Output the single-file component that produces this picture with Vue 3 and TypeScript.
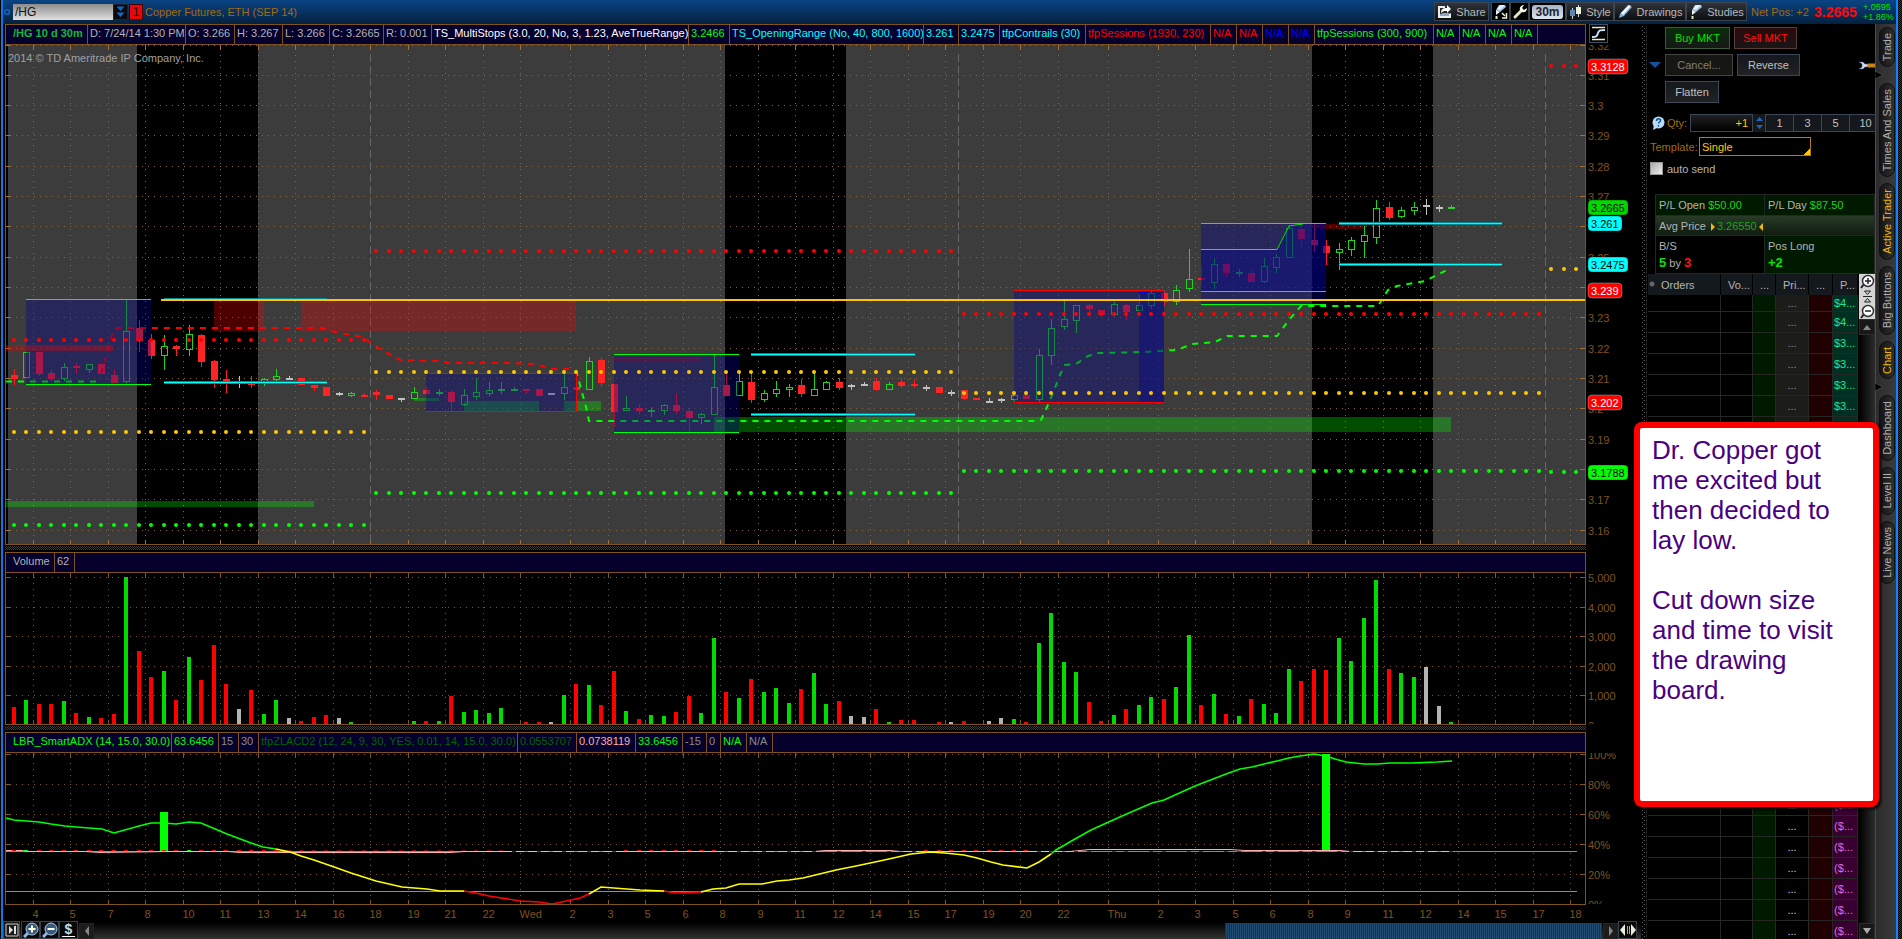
<script setup lang="ts">
type Tone = 'r' | 'g' | 'w'
interface Cell { text: string; width: number; color: string; bold?: boolean }
interface Candle { x: number; tone: Tone; high: number; low: number; top: number; bottom: number }
interface Zone { x: number; y: number; w: number; h: number; kind: string }
interface AxisLabel { text: string; y: number }

const STEP = 12.5
const FIRST = 14
const barX = (i: number): number => Math.floor(FIRST + i * STEP)

const priceHeader: Cell[] = [
  { text: '/HG 10 d 30m', width: 82, color: '#12b83c', bold: true },
  { text: 'D: 7/24/14 1:30 PM', width: 98, color: '#b4b4b4' },
  { text: 'O: 3.266', width: 49, color: '#b4b4b4' },
  { text: 'H: 3.267', width: 48, color: '#b4b4b4' },
  { text: 'L: 3.266', width: 47, color: '#b4b4b4' },
  { text: 'C: 3.2665', width: 54, color: '#b4b4b4' },
  { text: 'R: 0.001', width: 48, color: '#b4b4b4' },
  { text: 'TS_MultiStops (3.0, 20, No, 3, 1.23, AveTrueRange)', width: 257, color: '#ffffff' },
  { text: '3.2466', width: 41, color: '#00ff00' },
  { text: 'TS_OpeningRange (No, 40, 800, 1600)', width: 194, color: '#00ffff' },
  { text: '3.261', width: 35, color: '#00ffff' },
  { text: '3.2475', width: 41, color: '#00ffff' },
  { text: 'tfpContrails (30)', width: 86, color: '#00ffff' },
  { text: 'tfpSessions (1930, 230)', width: 125, color: '#ff0000' },
  { text: 'N/A', width: 26, color: '#ff0000' },
  { text: 'N/A', width: 26, color: '#ff0000' },
  { text: 'N/A', width: 26, color: '#0000ff' },
  { text: 'N/A', width: 26, color: '#0000ff' },
  { text: 'tfpSessions (300, 900)', width: 119, color: '#00ff00' },
  { text: 'N/A', width: 26, color: '#00ff00' },
  { text: 'N/A', width: 26, color: '#00ff00' },
  { text: 'N/A', width: 26, color: '#00ff00' },
  { text: 'N/A', width: 26, color: '#00ff00' }
]
const volumeHeader: Cell[] = [
  { text: 'Volume', width: 49, color: '#b4b4b4' },
  { text: '62', width: 20, color: '#b4b4b4' }
]
const adxHeader: Cell[] = [
  { text: 'LBR_SmartADX (14, 15.0, 30.0)', width: 166, color: '#00ff00' },
  { text: '63.6456', width: 47, color: '#00ff00' },
  { text: '15', width: 20, color: '#8c8c8c' },
  { text: '30', width: 20, color: '#8c8c8c' },
  { text: 'tfpZLACD2 (12, 24, 9, 30, YES, 0.01, 14, 15.0, 30.0)', width: 259, color: '#006400' },
  { text: '0.0553707', width: 59, color: '#006400' },
  { text: '0.0738119', width: 59, color: '#ffafaf' },
  { text: '33.6456', width: 47, color: '#00ff00' },
  { text: '-15', width: 24, color: '#8c8c8c' },
  { text: '0', width: 14, color: '#8c8c8c' },
  { text: 'N/A', width: 26, color: '#00ff00' },
  { text: 'N/A', width: 26, color: '#8c8c8c' }
]

const times = '33:4 70:5 108:7 145:8 183:10 220:11 258:13 295:14 333:16 370:18 408:19 445:21 483:22 520:Wed 570:2 608:3 645:5 683:6 720:8 758:9 795:11 833:12 870:14 908:15 945:17 983:19 1020:20 1058:22 1108:Thu 1158:2 1195:3 1233:5 1270:6 1308:8 1345:9 1383:11 1420:12 1458:14 1495:15 1533:17 1570:18'
  .split(' ')
  .map((t) => { const [x, label] = t.split(':'); return { x: Number(x) + 0.5, label } })

/* tone, high, low, body top, body bottom for each half-hour bar */
const candles: Candle[] = `r369,385,375,379 g352,378,352,378 r352,376,352,374 r370,381,373,379 g363,381,367,379 r363,374,366,368
g364,373,364,370 r363,374,364,374 r370,383,375,383 g300,383,331,382 r320,352,328,341 r334,359,340,356
g335,370,346,356 r345,356,346,349 g325,356,334,350 r334,367,335,362 r360,388,361,380 r370,393,379,381
w376,388,383,384 r376,388,383,385 g378,386,379,382 g369,382,376,380 w376,380,378,380 r378,385,378,385
r385,391,385,388 r387,396,387,396 w392,396,393,395 g392,397,393,396 r393,397,395,397 r390,400,392,395
r395,399,395,399 w398,402,398,400 g387,399,392,399 r387,394,390,394 g389,396,392,394 r390,411,392,402
g389,406,395,405 g378,400,392,397 g382,396,390,394 g382,394,389,391 g387,391,389,391 r389,394,389,391
r389,396,389,396 w393,395,393,395 g374,400,387,394 r370,394,387,390 g357,390,361,390 r358,386,360,383
r384,427,384,412 g396,411,408,411 r404,414,408,411 g407,417,410,412 g404,415,405,411 r393,414,405,411
r408,432,411,418 g413,424,414,418 g355,415,387,415 r373,396,385,396 g372,396,381,396 r372,403,382,400
g390,402,393,400 g381,397,389,394 g384,397,387,390 r379,397,385,394 g372,396,389,396 g381,390,382,390
r378,390,382,388 w384,390,385,387 w382,386,384,386 r378,391,381,390 g382,390,384,390 r378,388,382,386
r379,388,384,386 w385,391,387,389 r387,393,387,393 w390,396,392,394 r390,400,390,399 r398,400,398,400
w398,403,401,403 w398,403,399,401 g395,402,395,400 r395,399,395,399 g349,402,355,400 g319,365,328,356
g301,330,319,327 g305,333,305,321 r304,316,305,309 r310,315,310,315 g302,316,304,315 r304,320,305,312
g293,311,305,311 g291,309,293,306 r291,306,293,302 g285,305,290,302 g249,292,279,289 r266,287,278,280
g258,289,264,283 r263,277,264,273 g269,277,272,274 r270,282,273,282 g258,283,266,282 g254,273,257,268
g225,258,228,258 r225,247,229,239 r224,252,240,245 r240,265,246,253 g243,270,249,253 g237,256,240,250
g226,258,235,242 g200,244,208,238 r202,220,207,218 g207,218,210,217 g202,215,207,211 w199,215,205,207
w205,212,207,209 g205,209,207,209`
  .split(/\s+/)
  .map((s, i) => {
    const [high, low, top, bottom] = s.slice(1).split(',').map(Number)
    return { x: barX(i), tone: s[0] as Tone, high, low, top, bottom }
  })

const volumes = `r17 g24 r20 r20 g23 r11 g7 r6 r10 g147 r73 r47 g53 r24 g67 r44 r79 r40 w15 r34 g10 g24 w6 r3 r7 r9 w6 g2
w0 w0 w0 w0 g3 r3 g3 r28 g12 g14 g11 g16 w0 r2 r2 w2 g29 r40 g39 r19 r53 g13 r5 g9 g8 r12 r28 g11 g86 r32 g26 r45 g32 g36
g21 r35 g51 g20 r23 w8 w7 r15 g2 r4 r4 w0 r2 w2 r3 w0 w3 w6 g5 r2 g81 g111 g62 g52 r22 r3 g9 r15 g19 g27 r25 g37 g89 r19
g30 r10 g8 r25 g20 g11 g55 r43 r55 r54 g86 g63 g106 g144 r55 g51 g47 w57 w18 g2`
  .split(/\s+/)
  .map((s, i) => ({ x: barX(i), tone: s[0] as Tone, h: Number(s.slice(1)) }))

const zones: Zone[] = [
  { x: 26, y: 299, w: 125, h: 85, kind: 'blue' },
  { x: 6, y: 345, w: 107, h: 6, kind: 'red' },
  { x: 214, y: 301, w: 50, h: 30, kind: 'red' },
  { x: 301, y: 301, w: 275, h: 30, kind: 'red' },
  { x: 6, y: 501, w: 308, h: 6, kind: 'green' },
  { x: 414, y: 398, w: 25, h: 3, kind: 'green' },
  { x: 464, y: 401, w: 75, h: 10, kind: 'green' },
  { x: 564, y: 401, w: 37, h: 10, kind: 'green' },
  { x: 426, y: 373, w: 150, h: 38, kind: 'blue' },
  { x: 614, y: 357, w: 87, h: 4, kind: 'red' },
  { x: 714, y: 417, w: 737, h: 15, kind: 'green' },
  { x: 614, y: 354, w: 125, h: 78, kind: 'blue' },
  { x: 1014, y: 290, w: 150, h: 112, kind: 'blue' },
  { x: 1139, y: 292, w: 25, h: 110, kind: 'blue' },
  { x: 1314, y: 224, w: 50, h: 5, kind: 'red' },
  { x: 1201, y: 224, w: 125, h: 81, kind: 'blue' }
]
const edges: { d: string; color: string }[] = [
  { d: 'M26 299.5H151M26 384.5H151M614 354.5H739M614 432.5H739M1201 223.5H1326M1201 249.5H1277M1201 291.5H1326M1201 304.5H1326', color: '#00ff00' },
  { d: 'M426 373.5H576V411.5H426M1014 290.5H1164M1014 402.5H1164', color: '#ff0000' }
]
const cyanLines = 'M164 299.5H327M164 382.5H327M751 354.5H915M751 414.5H915M1339 223.5H1502M1339 264.5H1502'

const dotRows: { y: number; from: number; to: number; color: string }[] = [
  { y: 340, from: 0, to: 28, color: '#ff0000' },
  { y: 251, from: 29, to: 75, color: '#ff0000' },
  { y: 314, from: 76, to: 122, color: '#ff0000' },
  { y: 66, from: 123, to: 125, color: '#ff0000' },
  { y: 432, from: 0, to: 28, color: '#ffc800' },
  { y: 372, from: 29, to: 75, color: '#ffc800' },
  { y: 393, from: 76, to: 122, color: '#ffc800' },
  { y: 269, from: 123, to: 125, color: '#ffc800' },
  { y: 525, from: 0, to: 28, color: '#00ff00' },
  { y: 493, from: 29, to: 75, color: '#00ff00' },
  { y: 471, from: 76, to: 122, color: '#00ff00' },
  { y: 472, from: 123, to: 125, color: '#00ff00' }
]
const dots = dotRows.flatMap((r) =>
  Array.from({ length: r.to - r.from + 1 }, (_, k) => ({ x: barX(r.from + k), y: r.y, color: r.color }))
)

const priceGrid: AxisLabel[] = [
  { text: '3.32', y: 45 }, { text: '3.31', y: 75 }, { text: '3.3', y: 105 }, { text: '3.29', y: 135 },
  { text: '3.28', y: 166 }, { text: '3.27', y: 196 }, { text: '3.26', y: 226 }, { text: '3.25', y: 257 },
  { text: '3.24', y: 287 }, { text: '3.23', y: 317 }, { text: '3.22', y: 348 }, { text: '3.21', y: 378 },
  { text: '3.2', y: 408 }, { text: '3.19', y: 439 }, { text: '3.18', y: 469 }, { text: '3.17', y: 499 },
  { text: '3.16', y: 530 }
]
const hiddenByBubble = ['3.26', '3.24', '3.18']
const priceLabels = priceGrid.filter((g) => !hiddenByBubble.includes(g.text))
const volumeGrid: AxisLabel[] = [
  { text: '5,000', y: 577 }, { text: '4,000', y: 607 }, { text: '3,000', y: 636 },
  { text: '2,000', y: 666 }, { text: '1,000', y: 695 }, { text: '0', y: 725 }
]
const adxGrid: AxisLabel[] = [
  { text: '100%', y: 754 }, { text: '80%', y: 784 }, { text: '60%', y: 814 },
  { text: '40%', y: 844 }, { text: '20%', y: 874 }, { text: '0%', y: 904 }
]
const pct = (v: number, start: number, span: number): string => `${((v - start) / span) * 100}%`

const bubbles = [
  { text: '3.3128', y: 66, w: 40, bg: '#ff0000', fg: '#ffffff' },
  { text: '3.2665', y: 207, w: 40, bg: '#00d800', fg: '#000000' },
  { text: '3.261', y: 223, w: 34, bg: '#00ffff', fg: '#000000' },
  { text: '3.2475', y: 264, w: 40, bg: '#00ffff', fg: '#000000' },
  { text: '3.239', y: 290, w: 34, bg: '#ff0000', fg: '#ffffff' },
  { text: '3.202', y: 402, w: 34, bg: '#ff0000', fg: '#ffffff' },
  { text: '3.1788', y: 472, w: 40, bg: '#00ff00', fg: '#000000' }
]

const histogram = Array.from({ length: 116 }, (_, i) => {
  let color = '#ff0000'
  if (i === 1 || i === 14) color = '#00ff00'
  else if (i >= 22 && i <= 40) color = '#8b0000'
  else if (i >= 41 && i <= 48) color = i % 2 ? '#00e000' : '#006400'
  else if (i >= 57 && i <= 72) color = i % 2 ? '#00e000' : '#006400'
  else if (i >= 82) color = i % 3 ? '#006400' : '#00e000'
  return { x: barX(i) - 2, y: i < 40 || (i > 48 && i < 57) || (i > 72 && i < 82) ? 850 : 851, color }
})

const adxSegments: { color: string; points: string }[] = [
  { color: '#00ff00', points: '6,818 14,820 39,822 51,824 65,826 76,827 102,829 114,833 139,826 151,823 164,823 176,824 189,822 201,823 227,834 251,843 263,847 276,849' },
  { color: '#ffff00', points: '276,849 290,852 301,856 314,860 337,868 351,873 376,881 402,887 427,889 440,891 451,891 464,891' },
  { color: '#ff0000', points: '464,891 476,893 489,896 520,901 539,902 552,904 571,900 580,898 589,894' },
  { color: '#ffff00', points: '589,894 601,887 640,890 664,891' },
  { color: '#ff0000', points: '664,891 676,893 701,892' },
  { color: '#ffff00', points: '701,892 713,889 726,888 739,884 762,884 777,881 789,880 803,878 836,870 856,866 875,862 889,859 911,854 930,852 945,853 964,855 977,858 991,862 1003,865 1027,868 1039,862 1051,854' },
  { color: '#00ff00', points: '1051,854 1056,850 1075,839 1091,830 1122,816 1152,803 1164,800 1195,786 1226,774 1240,769 1252,767 1264,764 1277,761 1289,758 1300,756 1314,754 1326,756 1335,759 1346,762 1364,764 1377,764 1390,763 1411,763 1437,762 1452,761' }
]

const tabs = [
  { label: 'Trade', cls: 'far' },
  { label: 'Times And Sales', cls: '' },
  { label: 'Active Trader', cls: 'on' },
  { label: 'Big Buttons', cls: '' },
  { label: 'Chart', cls: 'on far' },
  { label: 'Dashboard', cls: '' },
  { label: 'Level II', cls: '' },
  { label: 'Live News', cls: '' }
]

/* quotes exist for the first six levels and from level 24 down */
const ladder = Array.from({ length: 31 }, (_, i) => {
  const quoted = i < 6 || i > 23
  return {
    up: i < 15,
    price: quoted ? '...' : '',
    pl: !quoted ? '' : i < 2 ? '$4...' : i < 15 ? '$3...' : '($...'
  }
})
</script>

<template>
  <div class="app">
    <div class="edge left"></div>
    <div class="window">
      <header class="topbar">
        <svg class="pin" width="8" height="8" viewBox="0 0 8 8"><circle cx="4" cy="4" r="2.4" fill="none" stroke="#1668c8" stroke-width="1.4" /></svg>
        <input class="symbol" type="text" value="/HG" aria-label="Symbol" />
        <button class="drop" aria-label="Symbol list">
          <svg width="13" height="14" viewBox="0 0 13 14"><path d="M2.500 1.500h8L6.500 6zM2.500 7.500h8L6.500 12z" fill="#1668c8" /></svg>
        </button>
        <button class="link-no">1</button>
        <h1>Copper Futures, ETH (SEP 14)</h1>
        <div class="tools">
          <button class="tool share">
            <svg width="15" height="13" viewBox="0 0 15 13"><path d="M1 1h7v2H3v8h9V9l2-1v5H1z" fill="#e8edf2" /><path d="M3 11h9V8H6l-3 1z" fill="#8fa4b8" /><path d="M4 8c0-4 2-5 6-5V0l4 4-4 4V6C8 6 6 6 4 8z" fill="#fff" /></svg>
            Share
          </button>
          <button class="tool square" aria-label="Quick studies">
            <svg width="16" height="16" viewBox="0 0 16 16"><path d="M6 1l6 0 1 2-6 5-4-2z" fill="#9cc4e0" /><path d="M7 1l5 0-5 5-3-1z" fill="#e4f0f8" /><path d="M3 6l4 2-4 3z" fill="#f4f8fb" /><path d="M3.500 12v3" stroke="#d8f0c0" stroke-width="2" /><path d="M9 9l3 3M13.500 9v5H9" stroke="#f0f0d8" stroke-width="1.500" fill="none" /></svg>
          </button>
          <button class="tool square" aria-label="Settings">
            <svg width="16" height="16" viewBox="0 0 16 16"><path d="M3 13l6-6" stroke="#dfe6c0" stroke-width="3" stroke-linecap="round" /><path d="M12 1L10 4l2 2 3-2c0 4-3 5-5 4L8 6c-1-2 1-5 4-5z" fill="#f4f6e8" /></svg>
          </button>
          <button class="tool period"><span>30m</span></button>
          <button class="tool style">
            <svg width="13" height="15" viewBox="0 0 13 15"><path d="M3.500 4v11M9.500 1v12" stroke="#c8d8e0" /><path d="M1 6h5v6H1z" fill="#5f88b0" /><path d="M7 3h5v7H7z" fill="#e8f0dc" /></svg>
            Style
          </button>
          <button class="tool drawings">
            <svg width="15" height="15" viewBox="0 0 15 15"><path d="M1 14l1-4L10 1l4 2-8 9z" fill="#7fb4e0" /><path d="M3 9l8-8 2 1-8 9z" fill="#f4f8fb" /></svg>
            Drawings
          </button>
          <button class="tool studies">
            <svg width="14" height="16" viewBox="0 0 14 16"><path d="M6 1l6 0 1 2-6 5-4-2z" fill="#9cc4e0" /><path d="M7 1l5 0-5 5-3-1z" fill="#e4f0f8" /><path d="M3 6l4 2-4 3z" fill="#f4f8fb" /><path d="M3.500 12v3" stroke="#d8f0c0" stroke-width="2" /></svg>
            Studies
          </button>
        </div>
        <span class="netpos">Net Pos: +2</span>
        <strong class="last">3.2665</strong>
        <span class="change"><span>+.0595</span><span>+1.86%</span></span>
      </header>

      <div class="body">
        <main class="charts">
          <section class="row price-row">
            <div class="panel">
              <div class="cells">
                <span v-for="(c, i) in priceHeader" :key="i" :class="{ bold: c.bold }" :style="{ width: c.width + 'px', color: c.color }">{{ c.text }}</span>
              </div>
              <svg class="plot" viewBox="6 45 1579 499" preserveAspectRatio="none">
                <rect x="6" y="45" width="1579" height="499" fill="#000" />
                <path d="M8 45H137V544H8zM258 45H725V544H258zM846 45H1312V544H846zM1433 45H1585V544H1433z" fill="#3c3c3c" />
                <g class="grid" stroke="#84683f">
                  <line v-for="t in times" :key="t.x" :x1="t.x" :x2="t.x" y1="55" y2="540" />
                  <line v-for="g in priceGrid" :key="g.y" x1="10" x2="1580" :y1="g.y + 0.5" :y2="g.y + 0.5" />
                </g>
                <g class="crisp" stroke="#a07038">
                  <path v-for="t in times" :key="t.x" :d="`M${t.x} 45v5M${t.x} 540v4`" />
                  <path v-for="g in priceGrid" :key="g.y" :d="`M6 ${g.y + 0.5}h5M1580 ${g.y + 0.5}h5`" />
                </g>
                <path d="M370.500 54V544M958.500 54V544M1545.500 54V544" stroke="#666" stroke-dasharray="8 4" class="crisp" />
                <g class="crisp">
                  <g v-for="c in candles" :key="c.x" :class="'c-' + c.tone">
                    <template v-if="c.tone === 'g' && c.bottom - c.top > 2">
                      <path :d="`M${c.x + 0.5} ${c.high}V${c.top}M${c.x + 0.5} ${c.bottom}V${c.low}`" />
                      <rect class="hollow" :x="c.x - 2.5" :y="c.top + 0.5" width="6" :height="c.bottom - c.top - 1" />
                    </template>
                    <template v-else>
                      <path :d="`M${c.x + 0.5} ${c.high}V${c.low}`" />
                      <rect class="solid" :x="c.x - 3" :y="c.top" width="7" :height="Math.max(1, c.bottom - c.top)" />
                    </template>
                  </g>
                </g>
                <path d="M6 381.500H101M576 370L580 385 586 407 589 421 1035 421 1041 420 1047 407 1053 393 1060 375 1065 365 1076 364 1088 356 1098 353 1145 352 1174 350 1182 348 1192 344 1215 342 1227 336 1277 336 1289 320 1301 306 1378 306 1388 290 1397 286 1425 281 1435 276 1447 270" fill="none" stroke="#00ff00" stroke-width="2" stroke-dasharray="6 6" />
                <path d="M101 374L113 332 118 328 322 328 335 332 363 337 370 342 380 349 400 360 439 361 449 363 510 363 535 364 551 369 569 369" fill="none" stroke="#ff0000" stroke-width="2" stroke-dasharray="6 6" />
                <rect v-for="(z, i) in zones" :key="i" :x="z.x" :y="z.y" :width="z.w" :height="z.h" :class="'z-' + z.kind" />
                <path class="z-blue" d="M1201 249H1277L1289 226 1303 224H1326V291H1201z" />
                <path d="M1277 249.500L1289 226 1303 224" fill="none" stroke="#00e000" />
                <path d="M1139 293L1150 291" fill="none" stroke="#0000e0" stroke-width="2" />
                <path v-for="e in edges" :key="e.color" :d="e.d" :stroke="e.color" fill="none" class="crisp" />
                <path :d="cyanLines" stroke="#008890" stroke-width="3" class="crisp" />
                <path :d="cyanLines" stroke="#00ffff" class="crisp" />
                <path d="M161 300H1585" stroke="#ffc010" stroke-width="2" class="crisp" />
                <circle v-for="(d, i) in dots" :key="i" :cx="d.x" :cy="d.y" r="2" :fill="d.color" />
              </svg>
              <span class="copyright">2014 © TD Ameritrade IP Company, Inc.</span>
            </div>
            <div class="axis">
              <div class="axis-head">
                <button class="curve" aria-label="Price scale">
                  <svg width="17" height="17" viewBox="0 0 17 17"><path d="M2 2.500h13M2 14.500h13" stroke="#e8e8c0" stroke-width="1.500" /><path d="M2 12c5 0 5-1 6-4s2-3 7-3" fill="none" stroke="#c8e0f8" stroke-width="2" /></svg>
                </button>
              </div>
              <svg class="scale">
                <text v-for="g in priceLabels" :key="g.y" x="2" :y="pct(g.y + 5, 45, 499)">{{ g.text }}</text>
                <g v-for="b in bubbles" :key="b.text">
                  <rect x="2" :y="pct(b.y - 7, 45, 499)" :width="b.w" height="15" rx="4" :fill="b.bg" :stroke="b.fg" stroke-opacity="0.3" />
                  <text x="5" :y="pct(b.y + 5, 45, 499)" :style="{ fill: b.fg }">{{ b.text }}</text>
                </g>
              </svg>
            </div>
          </section>

          <div class="hsplit"></div>

          <section class="row sub-row">
            <div class="panel">
              <div class="cells">
                <span v-for="(c, i) in volumeHeader" :key="i" :style="{ width: c.width + 'px', color: c.color }">{{ c.text }}</span>
              </div>
              <svg class="plot" viewBox="6 573 1579 151" preserveAspectRatio="none">
                <g class="grid" stroke="#80571f">
                  <line v-for="t in times" :key="t.x" :x1="t.x" :x2="t.x" y1="583" y2="720" />
                  <line v-for="g in volumeGrid" :key="g.y" x1="10" x2="1580" :y1="g.y + 0.5" :y2="g.y + 0.5" />
                </g>
                <g class="crisp" stroke="#80571f">
                  <path v-for="t in times" :key="t.x" :d="`M${t.x} 573v5M${t.x} 720v4`" />
                  <path v-for="g in volumeGrid" :key="g.y" :d="`M6 ${g.y + 0.5}h5M1580 ${g.y + 0.5}h5`" />
                </g>
                <rect v-for="v in volumes" :key="v.x" :x="v.x - 2" :y="724 - v.h" width="4" :height="v.h" :class="'v-' + v.tone" />
              </svg>
            </div>
            <div class="axis">
              <div class="axis-head"></div>
              <svg class="scale">
                <text v-for="g in volumeGrid" :key="g.y" x="2" :y="pct(g.y + 5, 573, 151)">{{ g.text }}</text>
              </svg>
            </div>
          </section>

          <div class="hsplit"></div>

          <section class="row sub-row">
            <div class="panel">
              <div class="cells">
                <span v-for="(c, i) in adxHeader" :key="i" :style="{ width: c.width + 'px', color: c.color }">{{ c.text }}</span>
              </div>
              <svg class="plot" viewBox="6 753 1579 151" preserveAspectRatio="none">
                <g class="grid" stroke="#80571f">
                  <line v-for="t in times" :key="t.x" :x1="t.x" :x2="t.x" y1="763" y2="900" />
                  <line v-for="g in adxGrid" :key="g.y" x1="10" x2="1580" :y1="g.y + 0.5" :y2="g.y + 0.5" />
                </g>
                <g class="crisp" stroke="#80571f">
                  <path v-for="t in times" :key="t.x" :d="`M${t.x} 753v5M${t.x} 900v4`" />
                  <path v-for="g in adxGrid" :key="g.y" :d="`M6 ${g.y + 0.5}h5M1580 ${g.y + 0.5}h5`" />
                </g>
                <path d="M6 851.500H1577M6 891.500H1577" stroke="#8c8c8c" class="crisp" />
                <path d="M160 812h8v39h-8zM1322 754h8v97h-8z" fill="#00ff00" />
                <polyline points="6,850.5 22,850.5 26,851.5 85,851.5 100,852.5 170,851.5 228,851.5 240,852.5 450,852.5 465,851.5 815,851.5 825,850.5 890,850.5 900,851.5 1070,851.5 1090,849.5 1230,849.5 1245,850.5 1340,850.5 1350,851.5 1453,851.5" fill="none" stroke="#ffafaf" />
                <rect v-for="h in histogram" :key="h.x" :x="h.x" :y="h.y" width="4" height="1" :fill="h.color" />
                <polyline v-for="s in adxSegments" :key="s.points" :points="s.points" :stroke="s.color" fill="none" stroke-width="1.6" />
              </svg>
            </div>
            <div class="axis">
              <div class="axis-head"></div>
              <svg class="scale">
                <text v-for="g in adxGrid" :key="g.y" x="2" :y="pct(g.y + 5, 753, 151)">{{ g.text }}</text>
              </svg>
            </div>
          </section>

          <svg class="times">
            <text v-for="t in times" :key="t.x" :x="pct(t.x - 1, 6, 1579)" y="13">{{ t.label }}</text>
          </svg>

          <footer class="bottom">
            <button class="mini corner" aria-label="Collapse sidebar">
              <svg width="14" height="14" viewBox="0 0 14 14"><path d="M1 1h12v12H1z" fill="none" stroke="#ccc" /><path d="M4 3l4 4-4 4zM9 3h2v8H9z" fill="#ddd" /></svg>
            </button>
            <button class="mini" aria-label="Zoom in">
              <svg width="16" height="16" viewBox="0 0 16 16"><path d="M1 15l4-4" stroke="#8fb8e0" stroke-width="3" /><circle cx="9" cy="7" r="6" fill="#3a5a80" stroke="#a8c8e8" /><path d="M9 3.500v7M5.500 7h7" stroke="#ffffd8" stroke-width="2" /></svg>
            </button>
            <button class="mini" aria-label="Zoom out">
              <svg width="16" height="16" viewBox="0 0 16 16"><path d="M1 15l4-4" stroke="#8fb8e0" stroke-width="3" /><circle cx="9" cy="7" r="6" fill="#3a5a80" stroke="#a8c8e8" /><path d="M5.500 7h7" stroke="#ffffd8" stroke-width="2" /></svg>
            </button>
            <button class="mini dollar"><span>$</span></button>
            <button class="mini arrow" aria-label="Scroll left">
              <svg width="6" height="10" viewBox="0 0 6 10"><path d="M5 0v10L1 5z" fill="#888" /></svg>
            </button>
            <div class="track"><div class="thumb"></div></div>
            <button class="mini arrow" aria-label="Scroll right">
              <svg width="6" height="10" viewBox="0 0 6 10"><path d="M1 0v10l4-5z" fill="#888" /></svg>
            </button>
            <button class="mini fit" aria-label="Fit to width">
              <svg width="16" height="12" viewBox="0 0 16 12"><path d="M5 0v12L0 6zM11 0v12l5-6z" fill="#e8eed8" /><path d="M7.500 2v8M9.500 2v8" stroke="#9ab" /></svg>
            </button>
          </footer>
        </main>

        <div class="vsplit"></div>

        <aside class="trader">
          <div class="orders-box">
            <div class="line">
              <button class="btn buy">Buy MKT</button>
              <button class="btn sell">Sell MKT</button>
            </div>
            <div class="line with-tri">
              <svg class="tri" width="12" height="7" viewBox="0 0 12 7"><path d="M0 0h12L6 6z" fill="#1850a0" /></svg>
              <button class="btn cancel">Cancel...</button>
              <button class="btn reverse">Reverse</button>
              <svg class="wrench" width="17" height="9" viewBox="0 0 17 9"><path d="M1 1h4l2 2h3v3H7L5 8H1l3-2V3z" fill="#d4dcee" stroke="#3c4c90" stroke-width="0.6" /><path d="M10 2.500h7v4h-7z" fill="#c88420" /></svg>
            </div>
            <div class="line"><button class="btn flatten">Flatten</button></div>
          </div>
          <div class="qty">
            <svg width="14" height="15" viewBox="0 0 14 15"><circle cx="7.500" cy="6.500" r="6" fill="#b8dcf8" /><path d="M3 9l-1 5 6-3z" fill="#b8dcf8" /><path d="M5.500 5c0-3 4-3 4-.5 0 1.500-2 1.500-2 3M7.500 9v1.500" fill="none" stroke="#10508a" stroke-width="1.500" /></svg>
            <label for="qty">Qty:</label>
            <input id="qty" type="text" value="+1" />
            <button class="spin" aria-label="Change quantity">
              <svg width="9" height="16" viewBox="0 0 9 16"><path d="M1 6l3.500-4L8 6zM1 10l3.500 4L8 10z" fill="#1668c8" /></svg>
            </button>
            <button class="preset">1</button><button class="preset">3</button><button class="preset">5</button><button class="preset wide">10</button>
          </div>
          <div class="template">
            <label for="tpl">Template:</label>
            <select id="tpl"><option>Single</option></select>
          </div>
          <div class="auto">
            <input id="auto" type="checkbox" />
            <label for="auto">auto send</label>
          </div>
          <div class="pl">
            <div class="p green">P/L Open <b>$50.00</b></div>
            <div class="p green">P/L Day <b>$87.50</b></div>
            <div class="p avg">Avg Price <i class="tr"></i><b>3.26550</b><i class="tl"></i></div>
            <div class="p two">B/S<span><strong class="g">5</strong> by <strong class="r">3</strong></span></div>
            <div class="p two green">Pos Long<span><strong class="g">+2</strong></span></div>
          </div>
          <div class="ladder">
            <table>
              <colgroup><col class="k1" /><col class="k2" /><col class="k3" /><col class="k4" /><col class="k5" /><col class="k6" /></colgroup>
              <thead>
                <tr><th class="first">Orders</th><th>Vo...</th><th>...</th><th>Pri...</th><th>...</th><th>P...</th></tr>
              </thead>
              <tbody>
                <tr v-for="(r, i) in ladder" :key="i" :class="{ up: r.up }">
                  <td></td><td></td><td class="bid"></td><td class="prc">{{ r.price }}</td><td class="ask"></td><td class="pnl">{{ r.pl }}</td>
                </tr>
              </tbody>
            </table>
            <div class="side">
              <button aria-label="Zoom in ladder"><svg width="15" height="15" viewBox="0 0 15 15"><path d="M1 14l3-4" stroke="#222" stroke-width="2" /><circle cx="8" cy="7" r="5.500" fill="#fff" stroke="#333" stroke-width="1.500" /><path d="M8 4v6M5 7h6" stroke="#222" stroke-width="1.500" /></svg></button>
              <button aria-label="Centre ladder"><svg width="15" height="15" viewBox="0 0 15 15"><path d="M3 7.500h9M4.500 2h6l-3 3.500zM4.500 13h6l-3-3.500z" fill="none" stroke="#222" /></svg></button>
              <button aria-label="Zoom out ladder"><svg width="15" height="15" viewBox="0 0 15 15"><path d="M1 14l3-4" stroke="#222" stroke-width="2" /><circle cx="8" cy="7" r="5.500" fill="#fff" stroke="#333" stroke-width="1.500" /><path d="M5 7h6" stroke="#222" stroke-width="1.500" /></svg></button>
              <button class="dark" aria-label="Scroll up"><svg width="8" height="5" viewBox="0 0 8 5"><path d="M0 5h8L4 0z" fill="#888" /></svg></button>
              <div class="vtrack"></div>
              <button class="dark" aria-label="Scroll down"><svg width="8" height="6" viewBox="0 0 8 6"><path d="M0 0h8L4 6z" fill="#aaa" /></svg></button>
            </div>
          </div>
        </aside>

        <nav class="tabs">
          <template v-for="t in tabs" :key="t.label">
            <button :class="t.cls"><span>{{ t.label }}</span></button>
            <svg v-if="t.cls.includes('far')" class="notch" width="8" height="8" viewBox="0 0 8 8"><path d="M0 0l8 4-8 4z" fill="#000" stroke="#666" stroke-width="0.5" /></svg>
          </template>
        </nav>
      </div>
    </div>
    <div class="edge right"></div>

    <div class="note">
      <p>Dr. Copper got me excited but then decided to lay low.</p>
      <p>Cut down size and time to visit the drawing board.</p>
    </div>
  </div>
</template>

<style>
html, body { margin: 0; background: #000; }
</style>

<style scoped>
* { box-sizing: border-box; }
.app { position: relative; display: flex; height: 100vh; min-height: 700px; overflow: hidden; background: #000; color: #b4b4b4; font: 11px/14px "Liberation Sans", Arial, sans-serif; }
button, input, select { font: inherit; color: inherit; margin: 0; padding: 0; border: 0; border-radius: 0; background: none; }
svg { display: block; flex: none; }
.edge.left { width: 3px; border-right: 2px solid #0a78e8; background: #000; }
.edge.right { width: 6px; border-left: 2px solid #0a84ff; background: repeating-conic-gradient(#303030 0 25%, #000 0 50%) 0 0 / 2px 2px; }
.window { flex: 1; min-width: 0; display: flex; flex-direction: column; }

.topbar { height: 24px; flex: none; display: flex; align-items: center; padding: 0 4px 1px 0; background: linear-gradient(#0a4484, #04203e); }
.pin { margin-right: 2px; }
.symbol { width: 100px; height: 16px; padding: 0 2px; color: #111; background: linear-gradient(#8c8c8c, #e0e0e0); font-size: 12px; }
.drop { width: 15px; height: 16px; background: #0a0a0a; border: 1px solid #223; display: flex; }
.link-no { width: 14px; height: 16px; margin-left: 1px; background: #e80808; border: 1px solid #400; color: #200; font-size: 12px; }
h1 { margin: 0 0 0 2px; font-size: 11px; font-weight: 400; color: #a06c10; flex: 1; white-space: nowrap; }
.tools { display: flex; }
.tool { height: 19px; border: 1px solid #3c4450; background: linear-gradient(#30343a, #0c0e10); display: flex; align-items: center; justify-content: center; gap: 4px; color: #b8b8b8; }
.share { width: 55px; margin-right: 2px; }
.square { width: 19px; background: #000; }
.period { width: 37px; background: #000; }
.period span { width: 31px; height: 14px; border-radius: 3px; background: linear-gradient(#a4b4c8, #dde6ee); color: #223; font-weight: 700; font-size: 12px; }
.style { width: 48px; }
.drawings { width: 72px; }
.studies { width: 61px; }
.netpos { width: 63px; margin-left: 4px; color: #a06c10; white-space: nowrap; }
.last { width: 49px; font-size: 14px; color: #ff0808; }
.change { width: 29px; display: flex; flex-direction: column; font-size: 9px; line-height: 10px; color: #00e000; }

.body { flex: 1; min-height: 0; display: flex; }
.charts { flex: 1; min-width: 0; display: flex; flex-direction: column; }
.row { display: flex; padding-left: 2px; min-height: 0; }
.price-row { flex: 521 1 0; }
.sub-row { flex: 173 1 0; }
.panel { position: relative; flex: 1; min-width: 0; display: flex; flex-direction: column; border: 1px solid #80531c; }
.cells { height: 20px; flex: none; display: flex; background: #05002c; border-bottom: 1px solid #80531c; overflow: hidden; }
.cells span { flex: none; padding: 1px 0 0 2px; line-height: 15px; border-right: 1px solid #80531c; white-space: nowrap; }
.cells span:first-child { padding-left: 7px; }
.panel .bold { font-weight: 700; }
.plot { flex: 1; width: 100%; min-height: 0; }
.copyright { position: absolute; left: 2px; top: 26px; color: #a0a0a0; }
.grid line { stroke-dasharray: 1 5; shape-rendering: crispEdges; }
.crisp { shape-rendering: crispEdges; }
.c-g path, .hollow { stroke: #1ed41e; fill: none; }
.c-g .solid { fill: #2cd42c; }
.c-r path { stroke: #ff1c1c; }
.c-r .solid { fill: #ff2424; }
.c-w path { stroke: #c0c0c0; }
.c-w .solid { fill: #c0c0c0; }
.z-blue { fill: rgba(0, 0, 150, 0.34); }
.z-red { fill: rgba(255, 0, 0, 0.3); }
.z-green { fill: rgba(0, 255, 0, 0.3); }
.v-g { fill: #00dc00; }
.v-r { fill: #ff0000; }
.v-w { fill: #b4b4b4; }
.axis { width: 55px; flex: none; display: flex; flex-direction: column; padding-bottom: 1px; }
.axis-head { height: 21px; flex: none; padding-left: 3px; }
.curve { width: 19px; height: 19px; border: 1px solid #3c5068; background: #000; }
.scale { flex: 1; width: 100%; min-height: 0; overflow: hidden; }
text { fill: #80531c; font-size: 11px; }
.hsplit { height: 7px; flex: none; margin: 0 55px 0 2px; border: solid #000; border-width: 1px 0 2px; background: repeating-conic-gradient(#3c3c3c 0 25%, #000 0 50%) 0 0 / 2px 2px; }
.times { height: 16px; width: calc(100% - 59px); margin-left: 3px; overflow: visible; }
.bottom { height: 18px; flex: none; display: flex; align-items: flex-end; padding-right: 4px; background: linear-gradient(#000 2px, #333); }
.mini { height: 18px; width: 19px; flex: none; border: 1px solid #38404c; background: #080808; display: flex; align-items: center; justify-content: center; }
.corner { width: 17px; border-color: #444; background: #181818; margin-right: 1px; }
.dollar { width: 19px; color: #c0dcf4; font-weight: 700; font-size: 14px; }
.dollar span { width: 13px; border-bottom: 1px solid #fff; line-height: 13px; text-align: center; }
.arrow { width: 15px; height: 16px; border-color: #222; background: #1c1c1c; margin-left: 1px; }
.track { flex: 1; height: 16px; display: flex; justify-content: flex-end; }
.thumb { width: 25%; background: repeating-linear-gradient(90deg, #16344f 0 1px, #214a70 1px 2px); }
.vsplit { width: 6px; flex: none; margin-top: 2px; border-right: 1px solid #1c1c1c; background: linear-gradient(#606060 1px, transparent 1px) 1px 0 / 1px 4px repeat-y, linear-gradient(#606060 1px, transparent 1px) 3px 2px / 1px 4px repeat-y; }

.trader { width: 228px; flex: none; display: flex; flex-direction: column; overflow: hidden; }
.orders-box { display: flex; flex-direction: column; gap: 5px; padding-top: 3px; }
.line { display: flex; align-items: center; gap: 4px; padding-left: 18px; height: 22px; }
.with-tri { padding-left: 2px; }
.btn { height: 22px; border: 1px solid #3c4656; background: linear-gradient(#14181c, #202224); color: #c0c0c0; font-size: 11px; }
.buy { width: 65px; border-color: #3a5a3a; background: linear-gradient(#0a2c0a, #161816); color: #00e000; }
.sell { width: 63px; border-color: #5a3a3a; background: linear-gradient(#2c0a0a, #181616); color: #ff1010; }
.cancel { width: 68px; border-color: #444; background: #161612; color: #808080; }
.reverse { width: 63px; }
.flatten { width: 54px; }
.wrench { margin-left: auto; }
.qty { display: flex; align-items: center; height: 18px; margin: 11px 0 5px; padding-left: 4px; overflow: hidden; }
.qty label { width: 25px; padding-left: 2px; color: #a06c10; flex: none; }
.qty input { width: 63px; height: 18px; flex: none; padding-right: 4px; text-align: right; color: #ffc800; border: 1px solid #3c4656; background: linear-gradient(#202020, #000); }
.spin { width: 12px; height: 18px; flex: none; background: #181818; display: flex; align-items: center; justify-content: center; }
.preset { width: 28px; height: 18px; flex: none; border: 1px solid #3c4656; border-right: 0; background: #14181c; color: #c0c0c0; }
.preset.wide { width: 32px; }
.template { display: flex; align-items: center; padding-left: 3px; }
.template label { width: 49px; color: #a06c10; }
.template select { width: 112px; height: 19px; padding-left: 2px; appearance: none; border: 1px solid #b07c10; color: #ffc800; background: linear-gradient(135deg, transparent 50%, #ffc800 50%) right 0 bottom 0 / 7px 7px no-repeat #000; }
.auto { display: flex; align-items: center; gap: 4px; height: 13px; margin: 6px 0 19px; padding-left: 3px; }
.auto input { appearance: none; width: 13px; height: 13px; border: 1px solid #999; background: linear-gradient(135deg, #aaa, #eee); }
.pl { display: grid; grid-template-columns: 108px 1fr; grid-template-rows: 20px 19px 37px; gap: 1px; margin-left: 8px; padding: 1px; background: #262626; }
.p { padding: 3px 3px 0; background: #000; white-space: nowrap; }
.p b { font-weight: 400; color: #1cd41c; }
.p.green { background: #001a00; }
.avg { grid-column: 1 / 3; background: linear-gradient(#283c28, #101c10); }
.p.avg b { color: #1ca41c; }
.tr, .tl { display: inline-block; border: solid transparent; border-width: 4px 0; margin: -1px 2px; }
.tr { border-left: 4px solid #f0b810; }
.tl { border-right: 4px solid #f0b810; }
.two { display: flex; flex-direction: column; gap: 3px; }
.two strong { font-size: 13px; }
.g { color: #00e800; }
.r { color: #ff1414; }
.ladder { flex: 1; min-height: 0; display: flex; overflow: hidden; gap: 1px; padding-left: 1px; }
table { width: 210px; flex: none; table-layout: fixed; border-collapse: separate; border-spacing: 0; height: max-content; }
.k1 { width: 73px; } .k2 { width: 32px; } .k3 { width: 23px; } .k4 { width: 33px; } .k5 { width: 24px; } .k6 { width: 25px; }
th { height: 21px; padding: 0 0 0 7px; text-align: left; font-weight: 400; background: #14191e; border-right: 1px solid #000; overflow: hidden; white-space: nowrap; }
th.first { padding-left: 13px; background: radial-gradient(circle at 4px 10px, #666 2px, transparent 3px) #14191e; }
td { height: 21px; padding: 0 1px; border: solid #262624; border-width: 0 1px 1px 0; overflow: hidden; white-space: nowrap; line-height: 14px; }
tbody tr:first-child td { height: 17px; }
.bid { background: #001a00; }
.ask { background: #200000; }
.prc { text-align: center; color: #d0d0d0; }
.up .prc { background: #1c1c18; color: #909090; }
.pnl { background: #380030; color: #e868d8; }
.up .pnl { background: #003022; color: #18e890; }
.side { width: 16px; flex: none; display: flex; flex-direction: column; }
.side button { height: 15px; width: 16px; flex: none; background: #d4d4d4; display: flex; align-items: center; justify-content: center; }
.side .dark { height: 16px; background: #181818; border: 1px solid #2c2c2c; }
.vtrack { flex: 1; background: linear-gradient(90deg, #000, #2c2c2c); }

.tabs { width: 21px; flex: none; display: flex; flex-direction: column; align-items: flex-end; gap: 6px; padding: 3px 1px 0 0; background: linear-gradient(90deg, #4a4a4a 1px, #2c2c2c 1px, #3a3a3a); }
.tabs button { width: 16px; padding: 5px 0; border: 1px solid #101010; border-radius: 8px; background: linear-gradient(90deg, #141414, #303030); color: #b0b0b0; display: flex; align-items: center; justify-content: center; }
.tabs span { writing-mode: vertical-rl; transform: rotate(180deg); line-height: 14px; }
.tabs .on { color: #f0b800; }
.notch { align-self: flex-start; margin: -2px 0; }

.note { position: absolute; right: 23px; top: 422px; width: 245px; height: 385px; padding: 7px 20px 0 12px; border: 6px solid #ff0000; border-radius: 8px; background: #fff; color: #4b0082; font-size: 26px; line-height: 30px; box-shadow: 2px 2px 3px #000; }
.note p { margin: 0 0 30px; }
</style>
